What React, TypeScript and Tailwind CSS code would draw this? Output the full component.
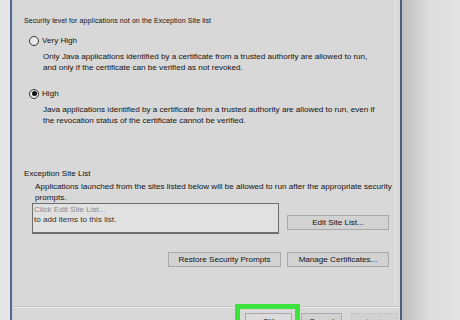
import React from 'react';

const font = { fontFamily: '"Liberation Sans", Arial, sans-serif' };

function WinButton({ label, className = '' }: { label: string; className?: string }) {
  return (
    <div
      className={`h-[15px] flex items-center justify-center whitespace-nowrap border border-[#a9a9a9] bg-[#d2d2d2] text-[8.1px] text-[#111] ${className}`}
    >
      {label}
    </div>
  );
}

function Radio({ checked, label }: { checked?: boolean; label: string }) {
  return (
    <div className="flex items-center h-[11px] pl-[5px] gap-[3px]">
      <div className="w-[10px] h-[10px] rounded-full border border-[#333] bg-[#e8e8e8] flex items-center justify-center">
        {checked && <div className="w-[5px] h-[5px] rounded-full bg-[#111]" />}
      </div>
      <span>{label}</span>
    </div>
  );
}

export default function App() {
  return (
    <div className="w-[460px] h-[320px] overflow-hidden flex bg-[#e3e3e3]" style={font}>
      <div className="w-[10px] bg-[#e6e6e6]" />
      <div className="w-[3px] bg-[#56698a] border-r border-[#c9d2e0]" />
      <div className="w-[387px] flex flex-col bg-[#d8d8d8] text-[8.1px] leading-[11px] text-[#111] whitespace-nowrap">
        <div className="flex-1 flex flex-col border-r border-[#e6e6e6] mr-[4px] pl-[11px]">
          <div className="mt-[15px] text-[7px] tracking-[0.1px]">Security level for applications not on the Exception Site list</div>

          <div className="mt-[9px]">
            <Radio label="Very High" />
          </div>
          <div className="mt-[6px] pl-[19px] leading-[10.5px]">
            Only Java applications identified by a certificate from a trusted authority are allowed to run,
            <br />
            and only if the certificate can be verified as not revoked.
          </div>

          <div className="mt-[15px]">
            <Radio checked label="High" />
          </div>
          <div className="mt-[5px] pl-[19px]">
            Java applications identified by a certificate from a trusted authority are allowed to run, even if
            <br />
            the revocation status of the certificate cannot be verified.
          </div>

          <div className="mt-[42px]">Exception Site List</div>
          <div className="mt-[3px] pl-[11px] leading-[10.5px]">
            Applications launched from the sites listed below will be allowed to run after the appropriate security
            <br />
            prompts.
          </div>

          <div className="flex items-start pl-[8px]">
            <div className="w-[247px] h-[31px] border border-[#6e6e6e] border-b-2 bg-[#e1e1e1] pl-[1px] pt-[1px] leading-[10px]">
              <div className="text-[#8a8a8a]">Click Edit Site List...</div>
              <div className="text-[#333]">to add items to this list.</div>
            </div>
            <WinButton label="Edit Site List..." className="ml-[8px] mt-[12px] w-[102px]" />
          </div>

          <div className="flex justify-end gap-[6px] mt-[18px] pr-[6px]">
            <WinButton label="Restore Security Prompts" className="w-[113px]" />
            <WinButton label="Manage Certificates..." className="w-[102px]" />
          </div>
        </div>

        <div className="h-[14px] border-t border-[#c2c2c2] shadow-[inset_0_1px_0_#ececec] flex items-start pt-[6px] pl-[232px] gap-[9px]">
          <div className="relative">
            <div className="absolute -left-[10px] -top-[9px] w-[65px] h-[30px] border-[5px] border-[#3be33b]" />
            <WinButton label="OK" className="w-[47px] border-[#3a6ea5] bg-[#dcdcdc] items-start pt-[2px]" />
          </div>
          <WinButton label="Cancel" className="w-[41px] items-start pt-[2px]" />
          <WinButton label="Apply" className="w-[47px] items-start pt-[2px] text-[#a0a0a0] border-[#c8c8c8] bg-[#cfcfcf]" />
        </div>
      </div>
      <div className="w-[2px] bg-[#4d5f80]" />
      <div className="flex-1 bg-gradient-to-r from-[#bfbfbf] via-[#dedede] to-[#e3e3e3]" />
    </div>
  );
}
